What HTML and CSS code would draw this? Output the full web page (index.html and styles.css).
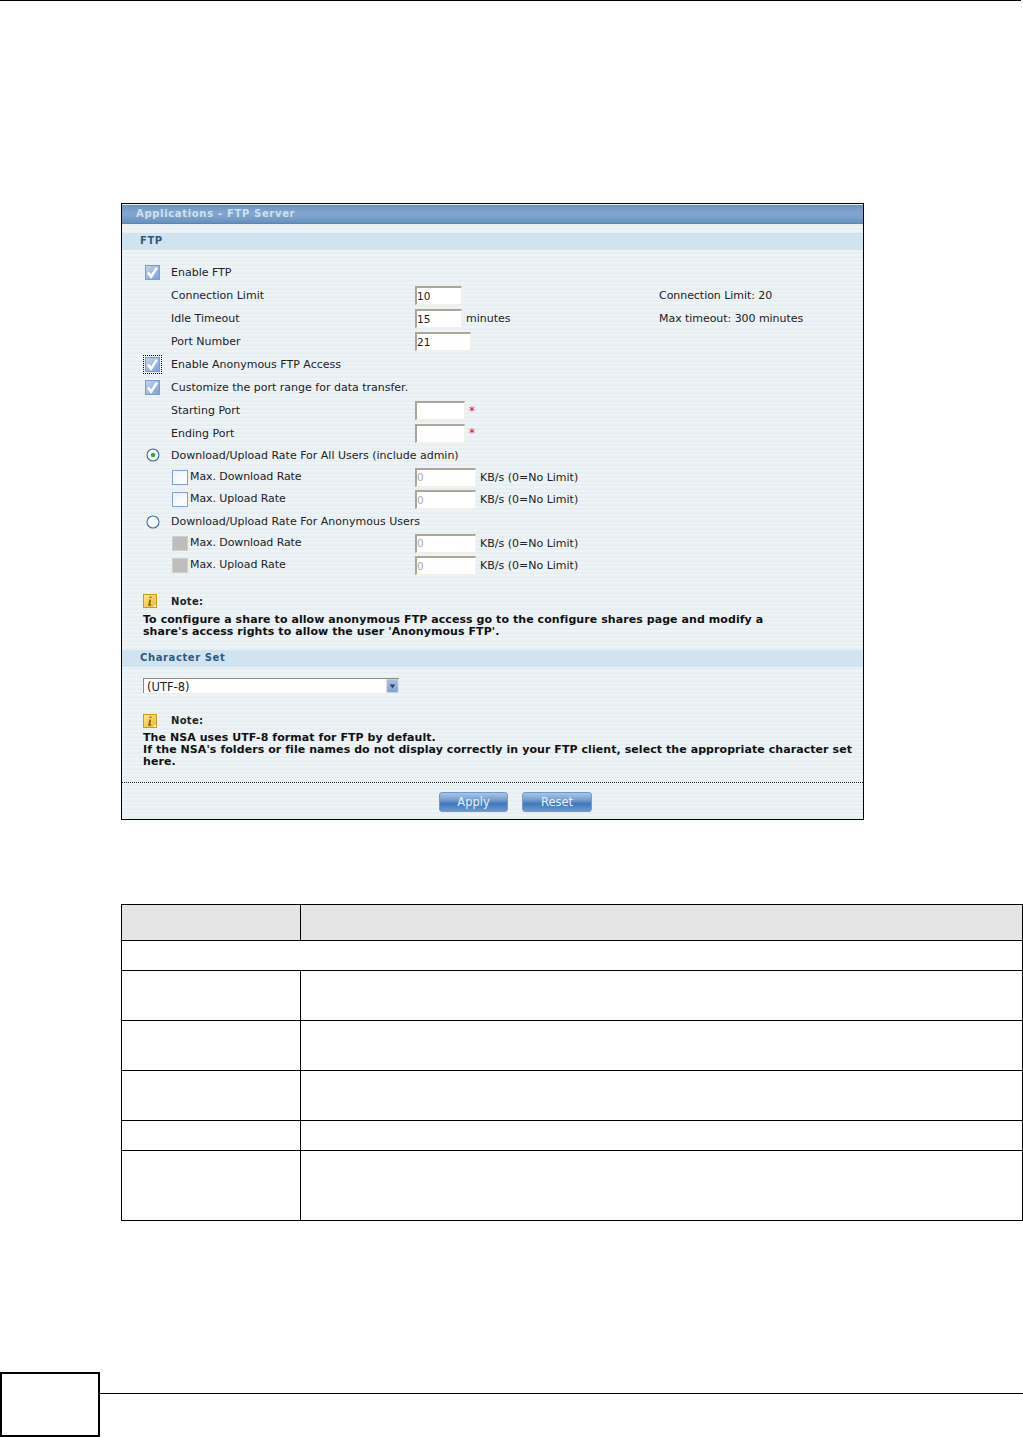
FILE: index.html
```html
<!DOCTYPE html>
<html lang="en">
<head>
<meta charset="utf-8">
<title>Applications - FTP Server</title>
<link rel="stylesheet" href="styles.css">
</head>
<body>
<svg class="defs" width="0" height="0" aria-hidden="true">
  <defs>
    <linearGradient id="gChecked" x1="0" y1="0" x2="1" y2="1">
      <stop offset="0" stop-color="#c4d4ef"/><stop offset="1" stop-color="#7d9ed9"/>
    </linearGradient>
    <linearGradient id="gEmpty" x1="0" y1="0" x2="1" y2="1">
      <stop offset="0" stop-color="#eef3fa"/><stop offset="1" stop-color="#ffffff"/>
    </linearGradient>
    <linearGradient id="gNote" x1="0" y1="0" x2="1" y2="1">
      <stop offset="0" stop-color="#fbe98a"/><stop offset="1" stop-color="#eeb92c"/>
    </linearGradient>
    <linearGradient id="gArrow" x1="0" y1="0" x2="0" y2="1">
      <stop offset="0" stop-color="#a9c0e2"/><stop offset="1" stop-color="#7f9fd2"/>
    </linearGradient>
    <symbol id="i-checked" viewBox="0 0 15 15">
      <rect x=".5" y=".5" width="14" height="14" fill="url(#gChecked)" stroke="#7b9ccf"/>
      <path d="M3 7.6 6 11.8 12 2.6" fill="none" stroke="#fff" stroke-width="2.6"/>
    </symbol>
    <symbol id="i-empty" viewBox="0 0 16 15">
      <rect x=".5" y=".5" width="15" height="14" fill="url(#gEmpty)" stroke="#7f9fd6"/>
    </symbol>
    <symbol id="i-off" viewBox="0 0 16 15">
      <rect x=".5" y=".5" width="15" height="14" fill="#bdbdbb" stroke="#cfcfcd"/>
    </symbol>
    <symbol id="i-radio-on" viewBox="0 0 14 14">
      <circle cx="7" cy="7" r="6" fill="#f6f9fb" stroke="#3f6f9f" stroke-width="1.1"/>
      <circle cx="7" cy="7" r="2.2" fill="#2eaa3c"/>
    </symbol>
    <symbol id="i-radio" viewBox="0 0 14 14">
      <circle cx="7" cy="7" r="6" fill="#f6f9fb" stroke="#3f6f9f" stroke-width="1.1"/>
    </symbol>
    <symbol id="i-note" viewBox="0 0 14 14">
      <rect x=".5" y=".5" width="13" height="13" fill="url(#gNote)" stroke="#c99a1c"/>
      <path d="M7.6 2.4v1.6M7.2 5.6 6.2 11h2" fill="none" stroke="#8a5a08" stroke-width="1.7"/>
      <path d="M13 10v3h-3z" fill="#fff"/>
    </symbol>
    <symbol id="i-arrow" viewBox="0 0 13 15">
      <rect x=".5" y=".5" width="12" height="14" fill="url(#gArrow)" stroke="#c3cfe0"/>
      <path d="M3.5 6h6L6.5 10z" fill="#2a3f66"/>
    </symbol>
  </defs>
</svg>

<div class="top-rule"></div>

<section class="shot">
  <h1 class="title">Applications - FTP Server</h1>

  <h2 class="band band-ftp">FTP</h2>
  <div class="form">
    <div class="row">
      <span class="mark"><svg class="ico15"><use href="#i-checked"/></svg></span>
      <span class="label">Enable FTP</span>
    </div>
    <div class="row">
      <span class="mark"></span>
      <span class="label">Connection Limit</span>
      <input class="field w-47" value="10">
      <span class="hint">Connection Limit: 20</span>
    </div>
    <div class="row">
      <span class="mark"></span>
      <span class="label">Idle Timeout</span>
      <input class="field w-47" value="15">
      <span class="unit">minutes</span>
      <span class="hint">Max timeout: 300 minutes</span>
    </div>
    <div class="row">
      <span class="mark"></span>
      <span class="label">Port Number</span>
      <input class="field w-56" value="21">
    </div>
    <div class="row">
      <span class="mark mark-focus"><svg class="ico15"><use href="#i-checked"/></svg></span>
      <span class="label">Enable Anonymous FTP Access</span>
    </div>
    <div class="row">
      <span class="mark"><svg class="ico15"><use href="#i-checked"/></svg></span>
      <span class="label">Customize the port range for data transfer.</span>
    </div>
    <div class="row">
      <span class="mark"></span>
      <span class="label">Starting Port</span>
      <input class="field w-50">
      <span class="req">*</span>
    </div>
    <div class="row h-22">
      <span class="mark"></span>
      <span class="label">Ending Port</span>
      <input class="field w-50">
      <span class="req">*</span>
    </div>
    <div class="row h-22">
      <span class="mark mark-radio"><svg class="ico14"><use href="#i-radio-on"/></svg></span>
      <span class="label">Download/Upload Rate For All Users (include admin)</span>
    </div>
    <div class="row h-22 sub">
      <svg class="ico16"><use href="#i-empty"/></svg>
      <span class="label-sub">Max. Download Rate</span>
      <input class="field w-61 off" value="0" disabled>
      <span class="unit">KB/s (0=No Limit)</span>
    </div>
    <div class="row sub">
      <svg class="ico16"><use href="#i-empty"/></svg>
      <span class="label-sub">Max. Upload Rate</span>
      <input class="field w-61 off" value="0" disabled>
      <span class="unit">KB/s (0=No Limit)</span>
    </div>
    <div class="row h-21">
      <span class="mark mark-radio"><svg class="ico14"><use href="#i-radio"/></svg></span>
      <span class="label">Download/Upload Rate For Anonymous Users</span>
    </div>
    <div class="row h-22 sub">
      <svg class="ico16"><use href="#i-off"/></svg>
      <span class="label-sub">Max. Download Rate</span>
      <input class="field w-61 off" value="0" disabled>
      <span class="unit">KB/s (0=No Limit)</span>
    </div>
    <div class="row sub">
      <svg class="ico16"><use href="#i-off"/></svg>
      <span class="label-sub">Max. Upload Rate</span>
      <input class="field w-61 off" value="0" disabled>
      <span class="unit">KB/s (0=No Limit)</span>
    </div>
  </div>

  <div class="note note-one">
    <div class="note-head"><svg class="ico14 note-ico"><use href="#i-note"/></svg><span>Note:</span></div>
    <p class="note-text">To configure a share to allow anonymous FTP access go to the configure shares page and modify a<br>share's access rights to allow the user 'Anonymous FTP'.</p>
  </div>

  <h2 class="band band-char">Character Set</h2>
  <div class="select">
    <span class="select-value">(UTF-8)</span>
    <svg class="select-arrow"><use href="#i-arrow"/></svg>
  </div>

  <div class="note note-two">
    <div class="note-head"><svg class="ico14 note-ico"><use href="#i-note"/></svg><span>Note:</span></div>
    <p class="note-text">The NSA uses UTF-8 format for FTP by default.<br>If the NSA's folders or file names do not display correctly in your FTP client, select the appropriate character set<br>here.</p>
  </div>

  <div class="actions">
    <button class="btn" type="button">Apply</button>
    <button class="btn btn-reset" type="button">Reset</button>
  </div>
</section>

<table class="grid">
  <colgroup><col class="col-a"><col class="col-b"></colgroup>
  <tr class="r-head"><th></th><th></th></tr>
  <tr class="r-30"><td colspan="2"></td></tr>
  <tr class="r-50"><td></td><td></td></tr>
  <tr class="r-50"><td></td><td></td></tr>
  <tr class="r-50"><td></td><td></td></tr>
  <tr class="r-30"><td></td><td></td></tr>
  <tr class="r-70"><td></td><td></td></tr>
</table>

<footer class="foot">
  <div class="page-box"></div>
  <div class="foot-rule"></div>
</footer>
</body>
</html>
```
FILE: styles.css
```css
* { box-sizing: border-box; }
html, body { margin: 0; padding: 0; background: #fff; }
body {
  width: 1023px;
  height: 1437px;
  overflow: hidden;
  font-family: "DejaVu Sans", Verdana, sans-serif;
  font-size: 11px;
  color: #222;
}
.defs { position: absolute; }
.top-rule { width: 1021px; height: 1px; background: #000; }

.shot {
  margin: 202px 0 0 121px;
  width: 743px;
  height: 617px;
  border: 1px solid #000;
  padding-top: 1px;
  background: repeating-linear-gradient(to bottom, #e8eff3 0 2px, #eef3f6 2px 4px);
}
.title {
  margin: 0;
  height: 19px;
  padding-left: 14px;
  font-size: 10px;
  line-height: 18px;
  font-weight: 700;
  letter-spacing: .67px;
  color: #cfe0ee;
  background: linear-gradient(to bottom, #6c93c0 0, #83a6cf 45%, #7fa3cc 60%, #6690bd 100%);
  border-bottom: 1px solid #5f85ad;
}
.band {
  margin: 0;
  height: 17px;
  padding-left: 18px;
  font-size: 10px;
  line-height: 16px;
  font-weight: 700;
  letter-spacing: .6px;
  color: #2e5a80;
  background: #d2e3f0;
}
.band-ftp { margin-top: 9px; }
.band-char { margin-top: 11px; }

.form { padding: 11px 0 0 23px; }
.row { display: flex; align-items: center; height: 23px; }
.h-21 { height: 21px; }
.h-22 { height: 22px; }
.mark {
  flex: none;
  width: 15px;
  height: 15px;
  margin-right: 11px;
  display: flex;
  align-items: center;
  justify-content: center;
}
.mark-focus { outline: 1px dotted #000; outline-offset: 1px; }
.mark-radio { padding-left: 1px; }
.label { flex: none; width: 244px; white-space: nowrap; }
.sub { padding-left: 27px; }
.label-sub { flex: none; width: 227px; padding: 0 0 2px 2px; white-space: nowrap; letter-spacing: -.09px; }
.ico14 { flex: none; width: 14px; height: 14px; }
.ico15 { flex: none; width: 15px; height: 15px; }
.ico16 { flex: none; width: 16px; height: 15px; }

.field {
  flex: none;
  height: 19px;
  padding: 0 0 1px;
  font-family: inherit;
  font-size: 10.5px;
  color: #222;
  background: #fff;
  border-style: solid;
  border-width: 2px 1px 1px 2px;
  border-color: #aaa798 #f2f1e6 #f2f1e6 #aaa798;
  border-radius: 0;
  outline: none;
}
.off { color: #aaa; background: #fff; }
.w-47 { width: 47px; }
.w-50 { width: 50px; }
.w-56 { width: 56px; }
.w-61 { width: 61px; }
.unit { margin-left: 4px; white-space: nowrap; }
.req { margin-left: 4px; color: #f00; font-size: 12px; line-height: 10px; }
.hint { flex: none; width: 204px; margin-left: auto; white-space: nowrap; letter-spacing: -.05px; }

.note { padding-left: 21px; }
.note-one { padding-top: 17px; }
.note-two { padding-top: 21px; }
.note-head {
  display: flex;
  align-items: center;
  height: 14px;
  font-weight: 700;
  font-size: 10px;
  letter-spacing: .3px;
}
.note-ico { margin-right: 14px; }
.note-text {
  margin: 6px 0 0;
  font-size: 11px;
  line-height: 12.3px;
  font-weight: 700;
  letter-spacing: .07px;
  white-space: nowrap;
  color: #111;
}
.note-two .note-text { margin-top: 4px; }

.select {
  display: flex;
  align-items: center;
  justify-content: space-between;
  margin: 11px 0 0 21px;
  width: 256px;
  height: 15px;
  padding-left: 3px;
  background: #fff;
  border-top: 1px solid #8a8a84;
  border-left: 1px solid #8a8a84;
  font-size: 11.5px;
}
.select-value { padding-top: 2px; }
.select-arrow { width: 13px; height: 14px; }

.actions {
  margin-top: 14px;
  height: 38px;
  padding: 9px 0 0 317px;
  display: flex;
  align-items: flex-start;
  border-top: 1px dotted #222;
}
.btn {
  width: 69px;
  height: 20px;
  padding: 0;
  font-family: "DejaVu Sans", Verdana, sans-serif;
  font-size: 11.5px;
  line-height: 18px;
  color: #e6f0fa;
  border: 1px solid #6f9ad0;
  border-radius: 3px;
  background: linear-gradient(to bottom, #a9c5e6 0, #7aa2d2 35%, #3f78b8 60%, #6c99cf 100%);
}
.btn-reset { margin-left: 14px; width: 70px; }

.grid {
  margin: 84px 0 0 121px;
  width: 902px;
  border-collapse: collapse;
  table-layout: fixed;
}
.col-a { width: 179px; }
.grid th, .grid td { padding: 0; border: 1px solid #000; }
.r-head th { background: #e5e5e5; height: 36px; }
.r-30 td { height: 30px; }
.r-50 td { height: 50px; }
.r-70 td { height: 70px; }

.foot { display: flex; margin-top: 151px; }
.page-box { flex: none; width: 100px; height: 65px; border: 2px solid #000; }
.foot-rule { flex: 1; height: 1px; margin-top: 21px; background: #000; }
```
